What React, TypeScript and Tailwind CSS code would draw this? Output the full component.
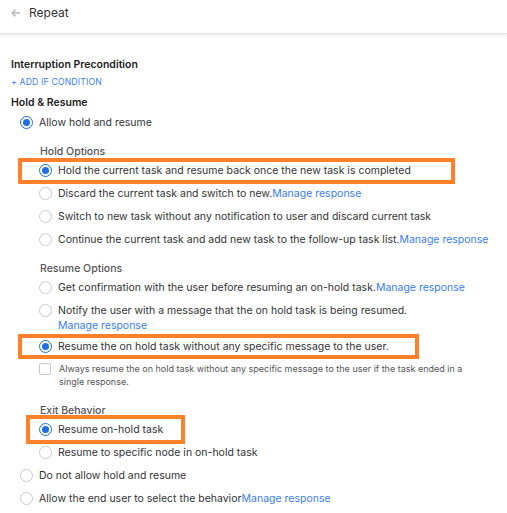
import React from "react";

type Opt = { label: string; link?: string; checked?: boolean; wrapLink?: boolean };

const Radio = ({ checked }: { checked?: boolean }) =>
  checked ? (
    <span className="w-[13px] h-[13px] shrink-0 rounded-full border-[1.5px] border-[#1f6fe5] flex items-center justify-center bg-white">
      <span className="block w-[7px] h-[7px] rounded-full bg-[#1f6fe5]" />
    </span>
  ) : (
    <span className="block w-[13px] h-[13px] shrink-0 rounded-full border border-[#c9c9c9] bg-white" />
  );

const Mark = ({ box }: { box: string }) => (
  <span className={`absolute block border-4 border-[#fc8128] pointer-events-none ${box}`} />
);

const Row = ({ opt, mark }: { opt: Opt; mark?: string }) => (
  <div className={`relative flex items-start gap-[6px] ${opt.wrapLink ? "pt-[4px] pb-[2px]" : "py-[4px]"}`}>
    <span className="block mt-[1px]">
      <Radio checked={opt.checked} />
    </span>
    <span className="text-[10.5px] leading-[15px] text-[#333] whitespace-nowrap">
      {opt.label}
      {opt.link &&
        (opt.wrapLink ? (
          <span className="block text-[#3b7df6]">{opt.link}</span>
        ) : (
          <span className="text-[#3b7df6]">{opt.link}</span>
        ))}
    </span>
    {mark && <Mark box={mark} />}
  </div>
);

const SubLabel = ({ children, cls }: { children: React.ReactNode; cls: string }) => (
  <div className={`pl-px h-[14px] text-[10.5px] leading-[14px] font-medium text-[#555] ${cls}`}>{children}</div>
);

export default function App() {
  return (
    <div className="w-[507px] h-[513px] bg-white overflow-hidden font-['Inter',sans-serif]">
      <div className="h-[34px] flex items-start pt-[6px] gap-[8px] px-[11px] border-b border-[#e3e3e3] shadow-[0_2px_3px_rgba(0,0,0,0.07)]">
        <svg className="mt-[2px]" width="10" height="10" viewBox="0 0 10 10" fill="none" stroke="#b8b8b8" strokeWidth="1.6">
          <path d="M9 5H1.5M4.5 1.8 1.3 5l3.2 3.2" />
        </svg>
        <span className="text-[12px] leading-[14px] text-[#333]">Repeat</span>
      </div>

      <div className="px-[11px]">
        <div className="mt-[23px] h-[16px] text-[10.5px] leading-[16px] font-semibold text-[#222]">Interruption Precondition</div>
        <div className="mt-[2px] h-[14px] text-[8.6px] leading-[14px] tracking-[0.2px] text-[#3b7df6]">+ ADD IF CONDITION</div>
        <div className="mt-[6px] h-[16px] text-[10.5px] leading-[16px] font-semibold text-[#222]">Hold &amp; Resume</div>

        <div className="pl-[9px]">
          <Row opt={{ label: "Allow hold and resume", checked: true }} />

          <div className="pl-[19px]">
            <SubLabel cls="mt-[11px]">Hold Options</SubLabel>
            <Row
              opt={{ label: "Hold the current task and resume back once the new task is completed", checked: true }}
              mark="-left-[21px] -top-[1px] w-[437px] h-[26px]"
            />
            <Row opt={{ label: "Discard the current task and switch to new.", link: "Manage response" }} />
            <Row opt={{ label: "Switch to new task without any notification to user and discard current task" }} />
            <Row opt={{ label: "Continue the current task and add new task to the follow-up task list.", link: "Manage response" }} />

            <SubLabel cls="mt-[11px]">Resume Options</SubLabel>
            <Row opt={{ label: "Get confirmation with the user before resuming an on-hold task.", link: "Manage response" }} />
            <Row
              opt={{
                label: "Notify the user with a message that the on hold task is being resumed.",
                link: "Manage response",
                wrapLink: true,
              }}
            />
            <Row
              opt={{ label: "Resume the on hold task without any specific message to the user.", checked: true }}
              mark="-left-[21px] -top-[1px] w-[401px] h-[25px]"
            />
            <div className="flex items-start gap-[8px] pt-[4px]">
              <span className="block mt-[1px] w-[12px] h-[12px] shrink-0 rounded-[2px] border border-[#c9c9c9] bg-white" />
              <span className="text-[9px] leading-[13px] text-[#555] w-[440px]">
                Always resume the on hold task without any specific message to the user if the task ended in a
                <br />
                single response.
              </span>
            </div>

            <SubLabel cls="mt-[16px]">Exit Behavior</SubLabel>
            <Row opt={{ label: "Resume on-hold task", checked: true }} mark="-left-[13px] -top-[3px] w-[159px] h-[29px]" />
            <Row opt={{ label: "Resume to specific node in on-hold task" }} />
          </div>

          <Row opt={{ label: "Do not allow hold and resume" }} />
          <Row opt={{ label: "Allow the end user to select the behavior", link: "Manage response" }} />
        </div>
      </div>
    </div>
  );
}
